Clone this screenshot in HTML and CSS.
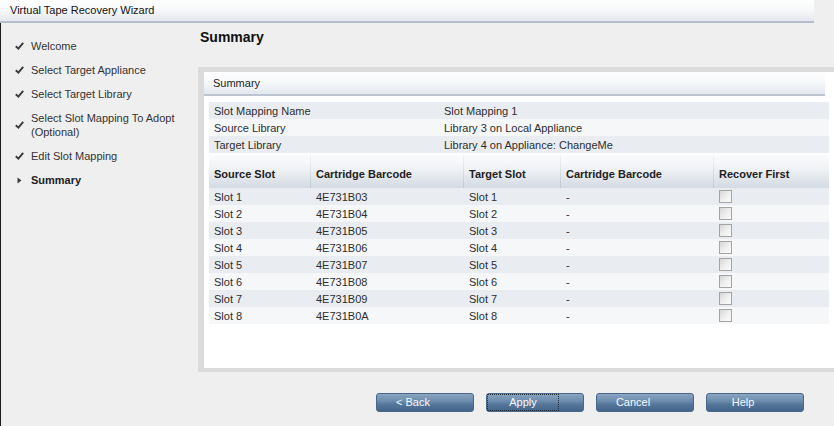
FILE: index.html
```html
<!DOCTYPE html>
<html>
<head>
<meta charset="utf-8">
<title>Virtual Tape Recovery Wizard</title>
<link rel="stylesheet" href="styles.css">
</head>
<body>
<div class="titlebar">Virtual Tape Recovery Wizard</div>
<div class="main">
  <nav class="nav">
    <div class="nav-item"><span class="nav-icon"><svg width="9" height="8" viewBox="0 0 9 8"><path d="M0.8 4.2 L3.4 6.6 L8.2 0.9" fill="none" stroke="#3a3a3a" stroke-width="1.9"/></svg></span><span>Welcome</span></div>
    <div class="nav-item"><span class="nav-icon"><svg width="9" height="8" viewBox="0 0 9 8"><path d="M0.8 4.2 L3.4 6.6 L8.2 0.9" fill="none" stroke="#3a3a3a" stroke-width="1.9"/></svg></span><span>Select Target Appliance</span></div>
    <div class="nav-item"><span class="nav-icon"><svg width="9" height="8" viewBox="0 0 9 8"><path d="M0.8 4.2 L3.4 6.6 L8.2 0.9" fill="none" stroke="#3a3a3a" stroke-width="1.9"/></svg></span><span>Select Target Library</span></div>
    <div class="nav-item"><span class="nav-icon"><svg width="9" height="8" viewBox="0 0 9 8"><path d="M0.8 4.2 L3.4 6.6 L8.2 0.9" fill="none" stroke="#3a3a3a" stroke-width="1.9"/></svg></span><span>Select Slot Mapping To Adopt<br>(Optional)</span></div>
    <div class="nav-item"><span class="nav-icon"><svg width="9" height="8" viewBox="0 0 9 8"><path d="M0.8 4.2 L3.4 6.6 L8.2 0.9" fill="none" stroke="#3a3a3a" stroke-width="1.9"/></svg></span><span>Edit Slot Mapping</span></div>
    <div class="nav-item current"><span class="nav-icon"><svg class="tri" width="5" height="7" viewBox="0 0 5 7"><path d="M0.5 0.5 L4.5 3.5 L0.5 6.5 Z" fill="#3a3a3a"/></svg></span><span>Summary</span></div>
  </nav>
  <section class="content">
    <h1 class="page-title">Summary</h1>
    <div class="panel">
      <div class="panel-inner">
        <div class="panel-head">Summary</div>
        <div class="panel-body">
          <div class="info">
            <div class="info-row"><span>Slot Mapping Name</span><span>Slot Mapping 1</span></div>
            <div class="info-row"><span>Source Library</span><span>Library 3 on Local Appliance</span></div>
            <div class="info-row"><span>Target Library</span><span>Library 4 on Appliance: ChangeMe</span></div>
          </div>
          <table class="grid">
            <colgroup><col class="c1"><col class="c2"><col class="c3"><col class="c4"><col class="c5"></colgroup>
            <thead>
              <tr><th>Source Slot</th><th>Cartridge Barcode</th><th>Target Slot</th><th>Cartridge Barcode</th><th>Recover First</th></tr>
            </thead>
            <tbody>
              <tr><td>Slot 1</td><td>4E731B03</td><td>Slot 1</td><td>-</td><td><span class="cb"></span></td></tr>
              <tr><td>Slot 2</td><td>4E731B04</td><td>Slot 2</td><td>-</td><td><span class="cb"></span></td></tr>
              <tr><td>Slot 3</td><td>4E731B05</td><td>Slot 3</td><td>-</td><td><span class="cb"></span></td></tr>
              <tr><td>Slot 4</td><td>4E731B06</td><td>Slot 4</td><td>-</td><td><span class="cb"></span></td></tr>
              <tr><td>Slot 5</td><td>4E731B07</td><td>Slot 5</td><td>-</td><td><span class="cb"></span></td></tr>
              <tr><td>Slot 6</td><td>4E731B08</td><td>Slot 6</td><td>-</td><td><span class="cb"></span></td></tr>
              <tr><td>Slot 7</td><td>4E731B09</td><td>Slot 7</td><td>-</td><td><span class="cb"></span></td></tr>
              <tr><td>Slot 8</td><td>4E731B0A</td><td>Slot 8</td><td>-</td><td><span class="cb"></span></td></tr>
            </tbody>
          </table>
        </div>
      </div>
    </div>
    <div class="actions">
      <button class="btn"><span class="lbl">&lt; Back</span></button>
      <button class="btn focus"><span class="lbl">Apply</span></button>
      <button class="btn"><span class="lbl">Cancel</span></button>
      <button class="btn"><span class="lbl">Help</span></button>
    </div>
  </section>
</div>
</body>
</html>
```
FILE: styles.css
```css
* { box-sizing: border-box; }
html, body { margin: 0; padding: 0; }
body {
  width: 834px;
  height: 426px;
  overflow: hidden;
  background: #efefef;
  font-family: "Liberation Sans", Arial, sans-serif;
  font-size: 11px;
  color: #2e2e2e;
}
.titlebar {
  width: 814px;
  height: 23px;
  line-height: 21px;
  padding-left: 10px;
  background: linear-gradient(#ffffff 0%, #f6f8fa 50%, #e4e8ee 100%);
  border-bottom: 2px solid #b5bfcb;
  color: #111;
}
.main {
  display: flex;
  height: 403px;
  border-left: 1px solid #1c1c1c;
}
.nav {
  width: 197px;
  flex: none;
  padding-top: 16px;
}
.nav-item {
  display: flex;
  align-items: center;
  line-height: 14px;
  margin-bottom: 10px;
  color: #333;
}
.nav-icon {
  width: 16px;
  margin-left: 14px;
  display: flex;
  align-items: center;
}
.nav-icon .tri { margin-left: 2px; }
.nav-item.current { font-weight: bold; color: #222; }
.content {
  flex: 1;
  min-width: 0;
}
.page-title {
  margin: 6px 0 22px 2px;
  font-size: 14px;
  line-height: 16px;
  font-weight: bold;
  color: #111;
}
.panel {
  height: 305px;
  background: #dbdbdb;
  padding: 5px 0 4px 6px;
}
.panel-inner {
  height: 296px;
  background: #ffffff;
}
.panel-head {
  height: 24px;
  margin-right: 9px;
  padding-left: 9px;
  padding-top: 1px;
  line-height: 21px;
  background: linear-gradient(#ffffff 0%, #f7f9fb 45%, #e3e8ee 100%);
  border-bottom: 2px solid #bcc5d0;
  color: #222;
}
.panel-body {
  padding: 6px 5px 0 5px;
}
.info-row {
  display: grid;
  grid-template-columns: 230px 1fr;
  height: 17px;
  padding-top: 1px;
  line-height: 16px;
  padding-left: 5px;
}
.info-row:nth-child(odd) { background: #e9edf1; }
.info-row:nth-child(even) { background: #f5f7f9; }
.grid {
  margin-top: 2px;
  width: 620px;
  table-layout: fixed;
  border-collapse: collapse;
  border-spacing: 0;
}
.c1 { width: 101px; }
.c2 { width: 153px; }
.c3 { width: 97px; }
.c4 { width: 153px; }
.c5 { width: 116px; }
.grid th {
  height: 33px;
  padding: 5px 0 0 5px;
  text-align: left;
  vertical-align: middle;
  font-weight: bold;
  color: #222;
  background: linear-gradient(#fbfcfd 0%, #eef1f4 45%, #d3dae2 100%);
}
.grid th + th {
  padding-left: 6px;
  background:
    linear-gradient(#f2f4f6, #bfc8d1) left top / 1px 100% no-repeat,
    linear-gradient(#fbfcfd 0%, #eef1f4 45%, #d3dae2 100%);
}
.grid td {
  height: 17px;
  padding: 1px 0 0 6px;
  line-height: 16px;
  white-space: nowrap;
}
.grid td:first-child { padding-left: 5px; }
.grid tbody tr:nth-child(odd) td { background: #e9edf1; }
.grid tbody tr:nth-child(even) td { background: #f5f7f9; }
.cb {
  display: inline-block;
  width: 13px;
  height: 13px;
  vertical-align: middle;
  margin-top: -3px;
  border: 1px solid #a4a4a4;
  background: linear-gradient(135deg, #d6d6d6 0%, #eeeeee 50%, #fbfbfb 100%);
}
.actions {
  display: flex;
  gap: 12px;
  margin-top: 21px;
  padding-left: 178px;
}
.btn {
  width: 98px;
  height: 19px;
  margin: 0;
  padding: 0 24px 0 0;
  border: 1px solid #47678b;
  border-radius: 3px;
  background: linear-gradient(#8ba5c1 0%, #6a89ab 45%, #56779b 60%, #44658b 100%);
  color: #f6f8fa;
  font-family: "Liberation Sans", Arial, sans-serif;
  font-size: 11px;
  line-height: 17px;
  text-align: center;
}
.btn .lbl {
  display: block;
  height: 17px;
}
.btn.focus .lbl {
  outline: 1px dotted #1e2a36;
  outline-offset: -1px;
}
```
